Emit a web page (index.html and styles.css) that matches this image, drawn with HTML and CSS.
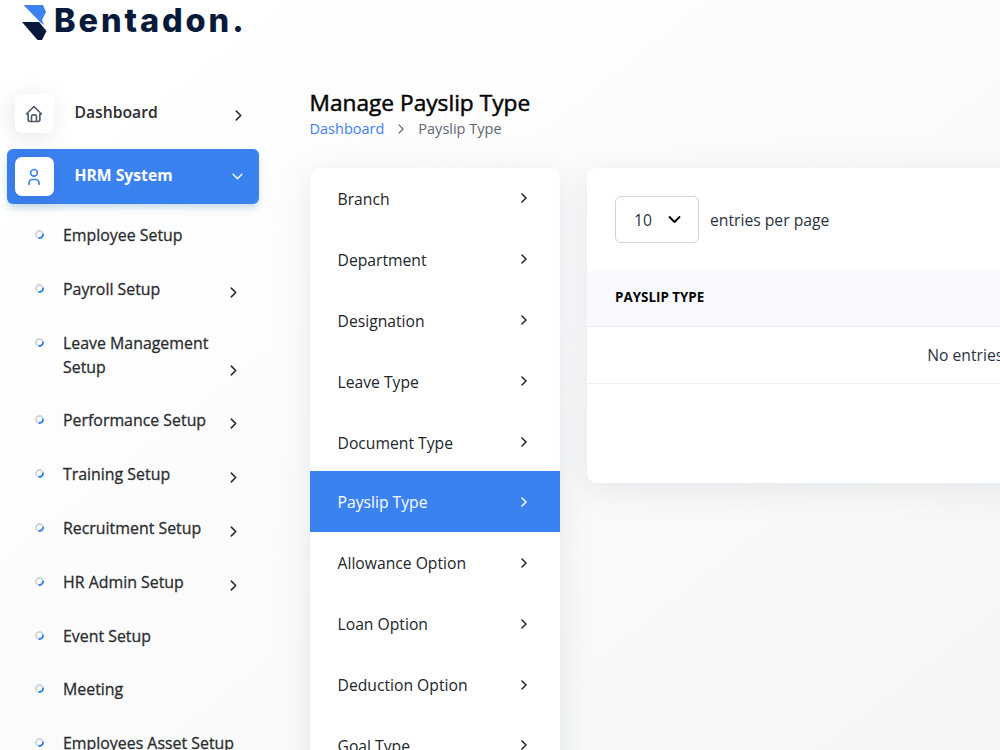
FILE: index.html
```html
<!DOCTYPE html>
<html lang="en">
  <head>
    <meta charset="UTF-8" />
    <meta name="viewport" content="width=device-width, initial-scale=1.0" />
    <title>Manage Payslip Type</title>
    <link rel="stylesheet" href="styles.css">
  </head>
  <body>
    <svg width="0" height="0" class="sprite">
      <symbol id="chevron" viewBox="0 0 24 24">
        <path d="M8.500 5 L15.500 12 L8.500 19" />
      </symbol>
      <symbol id="bullet" viewBox="0 0 10 10">
        <circle cx="5" cy="5" r="3.900" stroke="#cdd3df" />
        <path d="M8.900 4.800 A3.900 3.900 0 0 1 4.800 8.900" stroke="#2f7df6" />
      </symbol>
    </svg>

    <aside class="sidebar">
      <a class="logo" href="#">
        <svg width="26" height="37" viewBox="0 0 26 37">
          <path d="M1.500 1 H21 L24 8 L20 16 L22 21 L18 18 Z" fill="#3c82f0" />
          <path d="M0 18 H17 L24.500 27 L20 36 H15.500 Z" fill="#081a3b" />
        </svg>
        <span>Bentadon.</span>
      </a>

      <nav>
        <a class="nav-item" href="#">
          <span class="nav-icon">
            <svg width="20" height="20" viewBox="0 0 24 24">
              <path d="M5 12 H3 L12 3 L21 12 H19 V19 A2 2 0 0 1 17 21 H7 A2 2 0 0 1 5 19 V12" />
              <path d="M9 21 V15 A2 2 0 0 1 11 13 H13 A2 2 0 0 1 15 15 V21" />
            </svg>
          </span>
          <span class="nav-text">Dashboard</span>
          <svg class="arrow"><use href="#chevron" /></svg>
        </a>
        <a class="nav-item active" href="#">
          <span class="nav-icon">
            <svg width="20" height="20" viewBox="0 0 24 24">
              <circle cx="12" cy="7" r="4" />
              <path d="M6 21 V19 A4 4 0 0 1 10 15 H14 A4 4 0 0 1 18 19 V21" />
            </svg>
          </span>
          <span class="nav-text">HRM System</span>
          <svg class="arrow down"><use href="#chevron" /></svg>
        </a>

        <ul class="submenu">
          <li><svg class="bullet"><use href="#bullet" /></svg><span>Employee Setup</span></li>
          <li><svg class="bullet"><use href="#bullet" /></svg><span>Payroll Setup</span><svg class="arrow"><use href="#chevron" /></svg></li>
          <li><svg class="bullet"><use href="#bullet" /></svg><span>Leave Management Setup</span><svg class="arrow"><use href="#chevron" /></svg></li>
          <li><svg class="bullet"><use href="#bullet" /></svg><span>Performance Setup</span><svg class="arrow"><use href="#chevron" /></svg></li>
          <li><svg class="bullet"><use href="#bullet" /></svg><span>Training Setup</span><svg class="arrow"><use href="#chevron" /></svg></li>
          <li><svg class="bullet"><use href="#bullet" /></svg><span>Recruitment Setup</span><svg class="arrow"><use href="#chevron" /></svg></li>
          <li><svg class="bullet"><use href="#bullet" /></svg><span>HR Admin Setup</span><svg class="arrow"><use href="#chevron" /></svg></li>
          <li><svg class="bullet"><use href="#bullet" /></svg><span>Event Setup</span></li>
          <li><svg class="bullet"><use href="#bullet" /></svg><span>Meeting</span></li>
          <li><svg class="bullet"><use href="#bullet" /></svg><span class="wide">Employees Asset Setup</span></li>
        </ul>
      </nav>
    </aside>

    <main>
      <h4>Manage Payslip Type</h4>
      <div class="breadcrumb">
        <a href="#">Dashboard</a>
        <svg><use href="#chevron" /></svg>
        <span>Payslip Type</span>
      </div>

      <div class="row">
        <div class="card list-group">
          <a href="#">Branch<svg><use href="#chevron" /></svg></a>
          <a href="#">Department<svg><use href="#chevron" /></svg></a>
          <a href="#">Designation<svg><use href="#chevron" /></svg></a>
          <a href="#">Leave Type<svg><use href="#chevron" /></svg></a>
          <a href="#">Document Type<svg><use href="#chevron" /></svg></a>
          <a href="#" class="active">Payslip Type<svg><use href="#chevron" /></svg></a>
          <a href="#">Allowance Option<svg><use href="#chevron" /></svg></a>
          <a href="#">Loan Option<svg><use href="#chevron" /></svg></a>
          <a href="#">Deduction Option<svg><use href="#chevron" /></svg></a>
          <a href="#">Goal Type<svg><use href="#chevron" /></svg></a>
        </div>

        <div class="card table-card">
          <div class="table-top">
            <div class="selector">10<svg><use href="#chevron" /></svg></div>
            <span>entries per page</span>
          </div>
          <table>
            <thead>
              <tr><th>Payslip Type</th></tr>
            </thead>
            <tbody>
              <tr><td>No entries found</td></tr>
            </tbody>
          </table>
        </div>
      </div>
    </main>
  </body>
</html>
```
FILE: styles.css
```css
* {
  box-sizing: border-box;
}

:root {
  --primary: #3b82f1;
  --dark: #2b2d30;
}

body {
  margin: 0;
  height: 750px;
  overflow: hidden;
  display: flex;
  font-family: "Open Sans", sans-serif;
  font-size: 15.7px;
  line-height: 24px;
  color: #293240;
  background: linear-gradient(141.55deg, #fff 8%, #f5f7f6 94%);
}

a {
  color: inherit;
  text-decoration: none;
}

svg {
  flex-shrink: 0;
  fill: none;
  stroke: currentColor;
  stroke-width: 2;
  stroke-linecap: round;
  stroke-linejoin: round;
}

.sprite {
  position: absolute;
}

/* sidebar */
.sidebar {
  width: 309.5px;
  flex-shrink: 0;
}

.logo {
  display: flex;
  height: 86px;
  padding: 4px 0 0 22px;
  gap: 6px;
  color: #081a3b;
  font-family: Inter, sans-serif;
  font-size: 32.5px;
  font-weight: 800;
  letter-spacing: 2.9px;
  line-height: 34px;
}

.logo svg {
  stroke: none;
}

.nav-item {
  display: flex;
  align-items: center;
  width: 252px;
  height: 55px;
  margin: 0 0 8px 7px;
  padding: 0 13px 0 7.5px;
  border-radius: 6px;
  color: var(--dark);
  font-weight: 600;
}

.nav-icon {
  display: flex;
  align-items: center;
  justify-content: center;
  width: 39px;
  height: 39px;
  margin-right: 21px;
  border-radius: 7px;
  background: #fff;
  color: #525b69;
  box-shadow: -3px 4px 23px rgba(0, 0, 0, 0.1);
}

.nav-text {
  flex: 1;
  margin-top: -4px;
}

.arrow {
  width: 15px;
  height: 15px;
  stroke-width: 2.6;
}

.nav-item .arrow {
  margin-top: 3px;
}

.nav-item.active {
  margin-bottom: 7px;
  background: var(--primary);
  color: #fff;
  font-weight: 700;
  box-shadow: 0 5px 7px -1px rgba(81, 148, 200, 0.3);
}

.nav-item.active .nav-icon {
  color: var(--primary);
}

.nav-item .arrow.down {
  margin: 0 1px 0 0;
  stroke-width: 2.2;
  transform: rotate(90deg);
}

.submenu {
  list-style: none;
  margin: 0;
  padding: 0 0 0 35px;
}

.submenu li {
  display: flex;
  width: 206px;
  padding: 15px 0 14.8px;
  color: var(--dark);
  font-size: 15.9px;
  -webkit-text-stroke: 0.3px;
}

.submenu li:first-child {
  margin-top: -3px;
}

.submenu span {
  width: 163px;
}

.submenu .wide {
  width: 190px;
}

.submenu .arrow {
  align-self: flex-end;
  margin: 0 0 1px 2px;
}

.bullet {
  width: 9px;
  height: 9px;
  margin: 7px 19px 0 0;
}

/* page */
main {
  flex: 1;
  min-width: 0;
  padding-top: 87px;
}

h4 {
  margin: 0;
  color: #060606;
  font-size: 22.7px;
  font-weight: 400;
  line-height: 31px;
  -webkit-text-stroke: 0.5px;
}

.breadcrumb {
  display: flex;
  align-items: center;
  height: 22px;
  color: #5f6673;
  font-size: 14.5px;
}

.breadcrumb a {
  color: var(--primary);
}

.breadcrumb svg {
  width: 14px;
  height: 14px;
  margin: 0 10px;
}

.row {
  display: flex;
  gap: 27px;
  margin-top: 28px;
}

.card {
  flex-shrink: 0;
  background: #fff;
  border-radius: 10px;
  box-shadow: 0 6px 30px rgba(182, 186, 203, 0.3);
}

.list-group {
  width: 250.5px;
}

.list-group a {
  display: flex;
  align-items: center;
  justify-content: space-between;
  height: 60.9px;
  padding: 1px 29px 0 28px;
  color: #212529;
}

.list-group svg {
  width: 14px;
  height: 14px;
  margin-bottom: 1px;
  stroke-width: 2.6;
}

.list-group .active {
  margin-top: -1px;
  background: var(--primary);
  color: #fff;
}

.table-card {
  width: 804px;
  height: 315px;
}

.table-top {
  display: flex;
  align-items: center;
  gap: 11px;
  height: 103px;
  padding: 0 28px;
}

.selector {
  display: flex;
  align-items: center;
  justify-content: space-between;
  width: 84px;
  height: 47px;
  padding: 0 15px 0 18px;
  border: 1px solid #ced4da;
  border-radius: 6px;
}

.selector svg {
  width: 17px;
  height: 17px;
  color: #000;
  stroke-width: 2.6;
  transform: rotate(90deg);
}

table {
  width: 100%;
  border-collapse: collapse;
}

th {
  height: 55px;
  padding: 0 28px 2px;
  background: #f8f9fd;
  border-bottom: 1px solid #e9ebef;
  color: #060606;
  font-size: 13.4px;
  text-align: left;
  text-transform: uppercase;
}

td {
  height: 57px;
  padding: 0 28px;
  border-bottom: 1px solid #f1f1f1;
  text-align: center;
}
```
